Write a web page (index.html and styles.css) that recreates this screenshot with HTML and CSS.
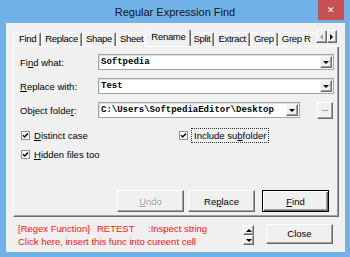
FILE: index.html
```html
<!DOCTYPE html>
<html lang="en">
<head>
    <meta charset="UTF-8">
    <title>Regular Expression Find</title>
    <link rel="stylesheet" href="styles.css">
</head>
<body>
    <div class="window">
        <div class="titlebar">
            <span class="title-spacer"></span>
            <span class="title">Regular Expression Find</span>
            <span class="close-x">&#x2715;</span>
        </div>
        <div class="client">
            <div class="tabs">
                <div class="tab-row">
                    <div class="tab-list">
                        <span class="tab first">Find</span>
                        <span class="tab">Replace</span>
                        <span class="tab">Shape</span>
                        <span class="tab">Sheet</span>
                        <span class="tab active">Rename</span>
                        <span class="tab">Split</span>
                        <span class="tab">Extract</span>
                        <span class="tab">Grep</span>
                        <span class="tab last">Grep R</span>
                    </div>
                    <div class="tab-scroll">
                        <span class="arrow-btn"><span class="tri-left"></span></span>
                        <span class="arrow-btn"><span class="tri-right"></span></span>
                    </div>
                </div>
                <div class="tab-panel">
                    <div class="field">
                        <label>Fi<u>n</u>d what:</label>
                        <div class="combo"><span class="value">Softpedia</span><span class="drop"></span></div>
                    </div>
                    <div class="field">
                        <label><u>R</u>eplace with:</label>
                        <div class="combo"><span class="value">Test</span><span class="drop"></span></div>
                    </div>
                    <div class="field">
                        <label>Object folde<u>r</u>:</label>
                        <div class="combo short"><span class="value">C:\Users\SoftpediaEditor\Desktop</span><span class="drop"></span></div>
                        <span class="browse">...</span>
                    </div>
                    <div class="checks">
                        <div class="check">
                            <svg class="box" width="9" height="9" viewBox="0 0 9 9"><rect x="0.5" y="0.5" width="8" height="8" fill="#fff" stroke="#8e8f8f"/><polyline points="2,4.2 3.7,6 7,2.6" fill="none" stroke="#000" stroke-width="1.5"/></svg>
                            <span><u>D</u>istinct case</span>
                        </div>
                        <div class="check">
                            <svg class="box" width="9" height="9" viewBox="0 0 9 9"><rect x="0.5" y="0.5" width="8" height="8" fill="#fff" stroke="#8e8f8f"/><polyline points="2,4.2 3.7,6 7,2.6" fill="none" stroke="#000" stroke-width="1.5"/></svg>
                            <span class="focus">Include su<u>b</u>folder</span>
                        </div>
                        <div class="check">
                            <svg class="box" width="9" height="9" viewBox="0 0 9 9"><rect x="0.5" y="0.5" width="8" height="8" fill="#fff" stroke="#8e8f8f"/><polyline points="2,4.2 3.7,6 7,2.6" fill="none" stroke="#000" stroke-width="1.5"/></svg>
                            <span><u>H</u>idden files too</span>
                        </div>
                    </div>
                    <div class="buttons">
                        <span class="btn disabled"><u>U</u>ndo</span>
                        <span class="btn">Re<u>p</u>lace</span>
                        <span class="btn default"><u>F</u>ind</span>
                    </div>
                </div>
            </div>
            <div class="footer">
                <div class="hint">
                    <div><span class="fn-group">[Regex Function]</span><span class="fn-name">RETEST</span><span>:Inspect string</span></div>
                    <div>Click here, insert this func into cureent cell</div>
                </div>
                <div class="spin">
                    <span class="spin-btn"><span class="tri-up"></span></span>
                    <span class="spin-btn"><span class="tri-down"></span></span>
                </div>
                <span class="btn close-btn">Close</span>
            </div>
        </div>
    </div>
</body>
</html>
```

FILE: styles.css
```css
* {
    box-sizing: border-box;
}
body {
    margin: 0;
    width: 350px;
    height: 257px;
    overflow: hidden;
    font-family: "Liberation Sans", Arial, sans-serif;
    font-size: 9.5px;
    color: #000;
}
u {
    text-decoration: underline;
    text-underline-offset: 1px;
}
.window {
    width: 350px;
    height: 257px;
    background-color: #70b2e8;
    display: flex;
    flex-direction: column;
}
.titlebar {
    height: 23px;
    display: flex;
}
.title-spacer {
    width: 32px;
}
.title {
    flex: 1;
    text-align: center;
    font-size: 11px;
    line-height: 25px;
    color: #141414;
}
.close-x {
    width: 26px;
    height: 20px;
    margin-right: 6px;
    background-color: #c75050;
    color: #fff;
    font-size: 9px;
    text-align: center;
    line-height: 20px;
}
.client {
    flex: 1;
    margin: 0 5px 5px 6px;
    background-color: #f0f0f0;
    padding: 7px 6px 0 7px;
    display: flex;
    flex-direction: column;
}
.tabs {
    width: 326px;
}
.tab-row {
    display: flex;
    height: 17px;
}
.tab-list {
    flex: 1;
    display: flex;
    align-items: flex-end;
    overflow: hidden;
    border-bottom: 1px solid #fff;
}
.tab {
    flex-shrink: 0;
    height: 15px;
    padding: 0 3px;
    line-height: 12px;
    letter-spacing: -0.3px;
    border-top: 1px solid #fff;
    border-left: 1px solid #fff;
    border-right: 1px solid #696969;
    border-radius: 2px 2px 0 0;
    box-shadow: inset -1px 0 #a0a0a0;
    background-color: #f0f0f0;
    margin-bottom: -1px;
    border-bottom: 1px solid #fff;
}
.tab.first {
    padding: 0 4px 0 5px;
}
.tab.last {
    flex-shrink: 1;
    min-width: 0;
    overflow: hidden;
    white-space: nowrap;
    border-right: none;
    box-shadow: none;
}
.tab.active {
    height: 18px;
    margin: 0 -2px -1px -2px;
    padding: 0 5px;
    line-height: 14px;
    border-bottom: none;
    position: relative;
    z-index: 1;
}
.tab-scroll {
    width: 23px;
    padding-right: 2px;
    display: flex;
    align-items: flex-start;
    border-bottom: 1px solid #fff;
}
.arrow-btn, .spin-btn {
    display: flex;
    align-items: center;
    justify-content: center;
    background-color: #f0f0f0;
    border: 1px solid;
    border-color: #fff #696969 #696969 #fff;
    box-shadow: inset -1px -1px #a0a0a0;
}
.arrow-btn {
    width: 10.5px;
    height: 13px;
}
.tri-left {
    border-top: 3px solid transparent;
    border-bottom: 3px solid transparent;
    border-right: 3px solid #a0a0a0;
}
.tri-right {
    border-top: 3px solid transparent;
    border-bottom: 3px solid transparent;
    border-left: 3px solid #000;
}
.tab-panel {
    height: 170px;
    border-left: 1px solid #fff;
    border-right: 1px solid #696969;
    border-bottom: 1px solid #696969;
    box-shadow: inset -1px -1px #a0a0a0;
    padding: 7px 4px 4px 6px;
    display: flex;
    flex-direction: column;
}
.field {
    display: flex;
    align-items: center;
    height: 16px;
    margin-bottom: 8px;
}
.field label {
    width: 78px;
}
.combo {
    flex: 1;
    height: 16px;
    background-color: #fff;
    border: 1px solid #a3a3a3;
    box-shadow: inset 1px 1px #e3e3e3;
    display: flex;
    align-items: center;
    padding-left: 2px;
    font-family: "Liberation Mono", "Courier New", monospace;
    font-weight: bold;
    font-size: 9px;
}
.combo.short {
    flex: none;
    width: 202px;
}
.combo .value {
    flex: 1;
}
.drop {
    width: 12px;
    height: 12px;
    margin-right: 1px;
    display: flex;
    align-items: center;
    justify-content: center;
    background-color: #f0f0f0;
    border: 1px solid;
    border-color: #fff #696969 #696969 #fff;
    box-shadow: inset -1px -1px #a0a0a0;
}
.drop::after {
    content: "";
    border-left: 3px solid transparent;
    border-right: 3px solid transparent;
    border-top: 3px solid #000;
}
.browse {
    width: 16px;
    height: 17px;
    margin-left: 17px;
    background-color: #f0f0f0;
    border: 1px solid;
    border-color: #fff #696969 #696969 #fff;
    box-shadow: inset -1px -1px #a0a0a0;
    text-align: center;
    line-height: 12px;
    font-size: 8px;
}
.checks {
    display: grid;
    grid-template-columns: 158px 1fr;
    grid-auto-rows: 15px;
    row-gap: 4px;
    margin-top: 2px;
}
.check {
    display: flex;
    align-items: center;
}
.check .box {
    margin-left: 1px;
    margin-right: 4px;
    flex-shrink: 0;
}
.check .focus {
    border: 1px dotted #333;
    padding: 1px 2px;
    margin-left: -1px;
}
.buttons {
    margin-top: auto;
    display: flex;
    justify-content: flex-end;
    gap: 4px;
    padding-right: 5px;
}
.btn {
    width: 67px;
    height: 22px;
    display: flex;
    align-items: center;
    justify-content: center;
    background-color: #f0f0f0;
    border: 1px solid;
    border-color: #fff #696969 #696969 #fff;
    box-shadow: inset -1px -1px #a0a0a0;
}
.btn.disabled {
    color: #a0a0a0;
    text-shadow: 1px 1px #fff;
}
.btn.default {
    margin-left: 3px;
    border: 1px solid #000;
    box-shadow: inset 1px 1px #fff, inset -1px -1px #696969, inset -2px -2px #a0a0a0;
}
.footer {
    flex: 1;
    display: flex;
    align-items: center;
    padding: 0 6px 0 5px;
}
.hint {
    flex: 1;
    color: #f01818;
    line-height: 13px;
    padding-top: 1px;
}
.fn-group {
    display: inline-block;
    width: 79px;
}
.fn-name {
    display: inline-block;
    width: 51px;
}
.spin {
    display: flex;
    flex-direction: column;
    margin-right: 12px;
    margin-top: 1px;
}
.spin-btn {
    width: 11px;
    height: 10px;
}
.tri-up {
    border-left: 3px solid transparent;
    border-right: 3px solid transparent;
    border-bottom: 3px solid #000;
}
.tri-down {
    border-left: 3px solid transparent;
    border-right: 3px solid transparent;
    border-top: 3px solid #000;
}
.close-btn {
    height: 20px;
    margin-top: -2px;
}
```
